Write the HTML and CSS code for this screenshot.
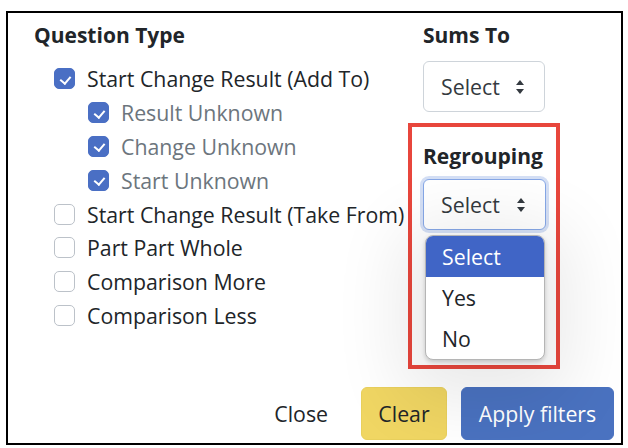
FILE: index.html
```html
<!DOCTYPE html>
<html>
<head>
<meta charset="utf-8">
<link rel="stylesheet" href="styles.css">
</head>
<body>
<div class="frame">
  <div class="content">
    <div class="col-left">
      <div class="heading">Question Type</div>
      <div class="checks">
        <label class="check"><span class="box on"></span><span class="lbl">Start Change Result (Add To)</span></label>
        <label class="check sub"><span class="box on"></span><span class="lbl">Result Unknown</span></label>
        <label class="check sub"><span class="box on"></span><span class="lbl">Change Unknown</span></label>
        <label class="check sub"><span class="box on"></span><span class="lbl">Start Unknown</span></label>
        <label class="check"><span class="box"></span><span class="lbl">Start Change Result (Take From)</span></label>
        <label class="check"><span class="box"></span><span class="lbl">Part Part Whole</span></label>
        <label class="check"><span class="box"></span><span class="lbl">Comparison More</span></label>
        <label class="check"><span class="box"></span><span class="lbl">Comparison Less</span></label>
      </div>
    </div>
    <div class="col-right">
      <div class="group sums">
        <div class="heading">Sums To</div>
        <div class="select"><span>Select</span><span class="arrows"></span></div>
      </div>
      <div class="group regroup">
        <div class="heading">Regrouping</div>
        <div class="select-wrap">
          <div class="select focus"><span>Select</span><span class="arrows"></span></div>
          <ul class="menu">
            <li class="active">Select</li>
            <li>Yes</li>
            <li>No</li>
          </ul>
        </div>
      </div>
    </div>
  </div>
  <div class="footer">
    <button class="btn btn-link">Close</button>
    <button class="btn btn-warn">Clear</button>
    <button class="btn btn-primary">Apply filters</button>
  </div>
</div>
</body>
</html>
```

FILE: styles.css
```css
* { box-sizing: border-box; }
html, body { margin: 0; padding: 0; background: #fff; }
body {
  font-family: "Open Sans", "Noto Sans", sans-serif;
  font-size: 21.3px;
  color: #212529;
}
.frame {
  margin: 11px 0 0 6px;
  width: 617px;
  height: 434px;
  border: 2.5px solid #000;
  display: flex;
  flex-direction: column;
  position: relative;
}
.content {
  display: flex;
  flex: 1;
}
.col-left {
  width: 400px;
  padding: 7px 0 0 26px;
}
.heading {
  font-weight: 700;
  font-size: 21px;
  line-height: 30px;
  color: #212529;
}
.checks {
  margin-top: 12px;
  padding-left: 20px;
}
.check {
  display: flex;
  align-items: center;
  height: 33.8px;
  gap: 12px;
  white-space: nowrap;
}
.check.sub { padding-left: 34px; }
.check.sub .lbl { color: #6c757d; }
.box {
  width: 21px;
  height: 21px;
  flex: none;
  border: 1px solid #bcc2c9;
  border-radius: 5px;
  background: #fff;
  position: relative;
}
.box.on {
  background: #4a6fc4;
  border-color: #4a6fc4;
}
.box.on::after {
  content: "";
  position: absolute;
  left: 6.5px;
  top: 4.5px;
  width: 5px;
  height: 8px;
  border: solid #fff;
  border-width: 0 2.2px 2.2px 0;
  transform: rotate(40deg);
}
.col-right {
  width: 200px;
  padding-top: 7px;
}
.group.sums { padding-left: 15px; }
.select {
  width: 122px;
  height: 51px;
  margin-top: 11px;
  border: 1px solid #ced4da;
  border-radius: 6px;
  display: flex;
  align-items: center;
  justify-content: space-between;
  padding: 0 19px 0 17px;
  background: #fff;
  color: #343a40;
}
.arrows {
  width: 9px;
  height: 14px;
  position: relative;
}
.arrows::before, .arrows::after {
  content: "";
  position: absolute;
  left: 0;
  border-left: 4.5px solid transparent;
  border-right: 4.5px solid transparent;
}
.arrows::before { top: 0; border-bottom: 5.5px solid #343a40; }
.arrows::after { bottom: 0; border-top: 5.5px solid #343a40; }
.group.regroup {
  margin-top: 11px;
  width: 152px;
  height: 246px;
  border: 4px solid #e8463c;
  padding: 14px 0 0 11px;
}
.select-wrap { position: relative; }
.select.focus {
  margin-top: 8px;
  width: 123px;
  border-color: #86a7e6;
  box-shadow: 0 0 0 3px rgba(100, 140, 220, 0.28);
}
.menu {
  position: absolute;
  left: 2px;
  top: 56px;
  width: 120px;
  margin: 0;
  padding: 0;
  list-style: none;
  background: #fff;
  border: 1px solid #b5b5b5;
  border-radius: 8px;
  overflow: hidden;
  box-shadow: 0 2px 4px rgba(0,0,0,0.18), 0 16px 70px 24px rgba(0,0,0,0.09);
}
.menu li {
  height: 41px;
  line-height: 41px;
  padding-left: 16px;
  color: #212529;
}
.menu li.active {
  background: #4065c6;
  color: #fff;
}
.footer {
  display: flex;
  justify-content: flex-end;
  align-items: center;
  gap: 14px;
  padding: 0 7px 3px 0;
}
.btn {
  font-family: inherit;
  font-size: 21.3px;
  height: 53px;
  border-radius: 6px;
  border: 1px solid transparent;
  padding: 0 10px;
}
.btn-link {
  background: transparent;
  color: #212529;
  padding: 0;
  margin-right: 18px;
}
.btn-warn {
  background: #f0d663;
  border-color: #e9d05d;
  width: 86px;
  color: #212529;
}
.btn-primary {
  background: #4a72c0;
  border-color: #4a72c0;
  width: 153px;
  color: #fff;
}
```
